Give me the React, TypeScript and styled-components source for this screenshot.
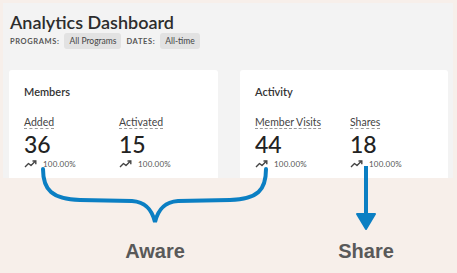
import type { FC } from 'react'
import styled, { createGlobalStyle } from 'styled-components'

const GlobalStyle = createGlobalStyle`
  html, body {
    margin: 0;
    padding: 0;
    background: #f7efea;
  }
  body {
    font-family: Lato, "Noto Sans", sans-serif;
    color: #333;
  }
`

interface Metric {
  label: string
  value: number
  change: string
}

interface CardData {
  title: string
  metrics: Metric[]
}

const CARDS: CardData[] = [
  {
    title: 'Members',
    metrics: [
      { label: 'Added', value: 36, change: '100.00%' },
      { label: 'Activated', value: 15, change: '100.00%' }
    ]
  },
  {
    title: 'Activity',
    metrics: [
      { label: 'Member Visits', value: 44, change: '100.00%' },
      { label: 'Shares', value: 18, change: '100.00%' }
    ]
  }
]

const TrendIcon: FC = () => (
  <svg width="13" height="8" viewBox="0 0 13 8" fill="none">
    <path d="M1 7 L4.5 3.5 L7 5.5 L11.5 1" stroke="#444" strokeWidth="1.4" strokeLinejoin="round" />
    <path d="M8.5 1 H11.8 V4.2" stroke="#444" strokeWidth="1.4" />
  </svg>
)

const Annotations: FC = () => (
  <Overlay width="457" height="273" viewBox="0 0 457 273">
    <path
      d="M43 169 C43 190 52 199 80 200 L132 201 C146 202 152 210 155 222 C158 210 164 202 178 201 L230 200 C258 199 266 190 266 169"
      stroke="#0b7fc3"
      strokeWidth="4"
      fill="none"
      strokeLinecap="round"
    />
    <line x1="366" y1="166" x2="366" y2="216" stroke="#0b7fc3" strokeWidth="4" />
    <path d="M357 214 L375 214 L366 229 Z" fill="#0b7fc3" stroke="#0b7fc3" strokeWidth="2" strokeLinejoin="round" />
  </Overlay>
)

export default function App() {
  return (
    <Page>
      <GlobalStyle />
      <Panel>
        <Title>Analytics Dashboard</Title>
        <Filters>
          <FilterLabel>PROGRAMS:</FilterLabel>
          <Pill>All Programs</Pill>
          <FilterLabel>DATES:</FilterLabel>
          <Pill>All-time</Pill>
        </Filters>
        <Cards>
          {CARDS.map((card) => (
            <Card key={card.title}>
              <CardTitle>{card.title}</CardTitle>
              <Metrics>
                {card.metrics.map((m) => (
                  <MetricBox key={m.label}>
                    <MetricLabel>{m.label}</MetricLabel>
                    <MetricValue>{m.value}</MetricValue>
                    <Trend>
                      <TrendIcon />
                      <span>{m.change}</span>
                    </Trend>
                  </MetricBox>
                ))}
              </Metrics>
            </Card>
          ))}
        </Cards>
      </Panel>
      <Labels>
        <StageLabel $center={155}>Aware</StageLabel>
        <StageLabel $center={366}>Share</StageLabel>
      </Labels>
      <Annotations />
    </Page>
  )
}

const Page = styled.div`
  position: relative;
  width: 457px;
  height: 273px;
  overflow: hidden;
`

const Panel = styled.div`
  margin: 3px 4px 0 3px;
  height: 175px;
  overflow: hidden;
  background: #f3f3f3;
  padding: 8px 4px 0 6px;
  box-sizing: border-box;
`

const Title = styled.div`
  font-size: 18px;
  font-weight: 600;
  color: #2d2d2d;
  line-height: 22px;
  padding-left: 1px;
`

const Filters = styled.div`
  display: flex;
  align-items: center;
  gap: 5px;
  margin-top: 0;
  padding-left: 1px;
`

const FilterLabel = styled.span`
  font-size: 7.5px;
  font-weight: 700;
  letter-spacing: 0.6px;
  color: #555;
`

const Pill = styled.span`
  font-size: 8.5px;
  color: #444;
  background: #e2e2e2;
  border-radius: 3px;
  padding: 4px 5px;
  line-height: 8px;
`

const Cards = styled.div`
  display: grid;
  grid-template-columns: 209px 208px;
  gap: 22px;
  margin-top: 21px;
`

const Card = styled.div`
  background: #fff;
  border-radius: 3px;
  height: 140px;
  padding: 15px 14px 0 15px;
  box-sizing: border-box;
`

const CardTitle = styled.div`
  font-size: 11px;
  font-weight: 600;
  color: #333;
`

const Metrics = styled.div`
  display: grid;
  grid-template-columns: 95px 1fr;
  margin-top: 18px;
`

const MetricBox = styled.div`
  display: flex;
  flex-direction: column;
  align-items: flex-start;
`

const MetricLabel = styled.span`
  font-size: 10.5px;
  color: #444;
  border-bottom: 1px dashed #999;
  line-height: 12px;
`

const MetricValue = styled.div`
  font-size: 23px;
  font-weight: 500;
  color: #222;
  line-height: 24px;
  margin-top: 3px;
`

const Trend = styled.div`
  display: flex;
  align-items: center;
  gap: 6px;
  margin-top: 3px;
  font-size: 8px;
  color: #555;
  letter-spacing: 0.2px;
`

const Labels = styled.div`
  position: relative;
  height: 95px;
`

const StageLabel = styled.span<{ $center: number }>`
  position: absolute;
  top: 61px;
  left: ${({ $center }) => $center}px;
  transform: translateX(-50%);
  font-family: "Liberation Sans", Arial, sans-serif;
  font-weight: 700;
  font-size: 20px;
  color: #595959;
  line-height: 24px;
`

const Overlay = styled.svg`
  position: absolute;
  left: 0;
  top: 0;
  pointer-events: none;
`
